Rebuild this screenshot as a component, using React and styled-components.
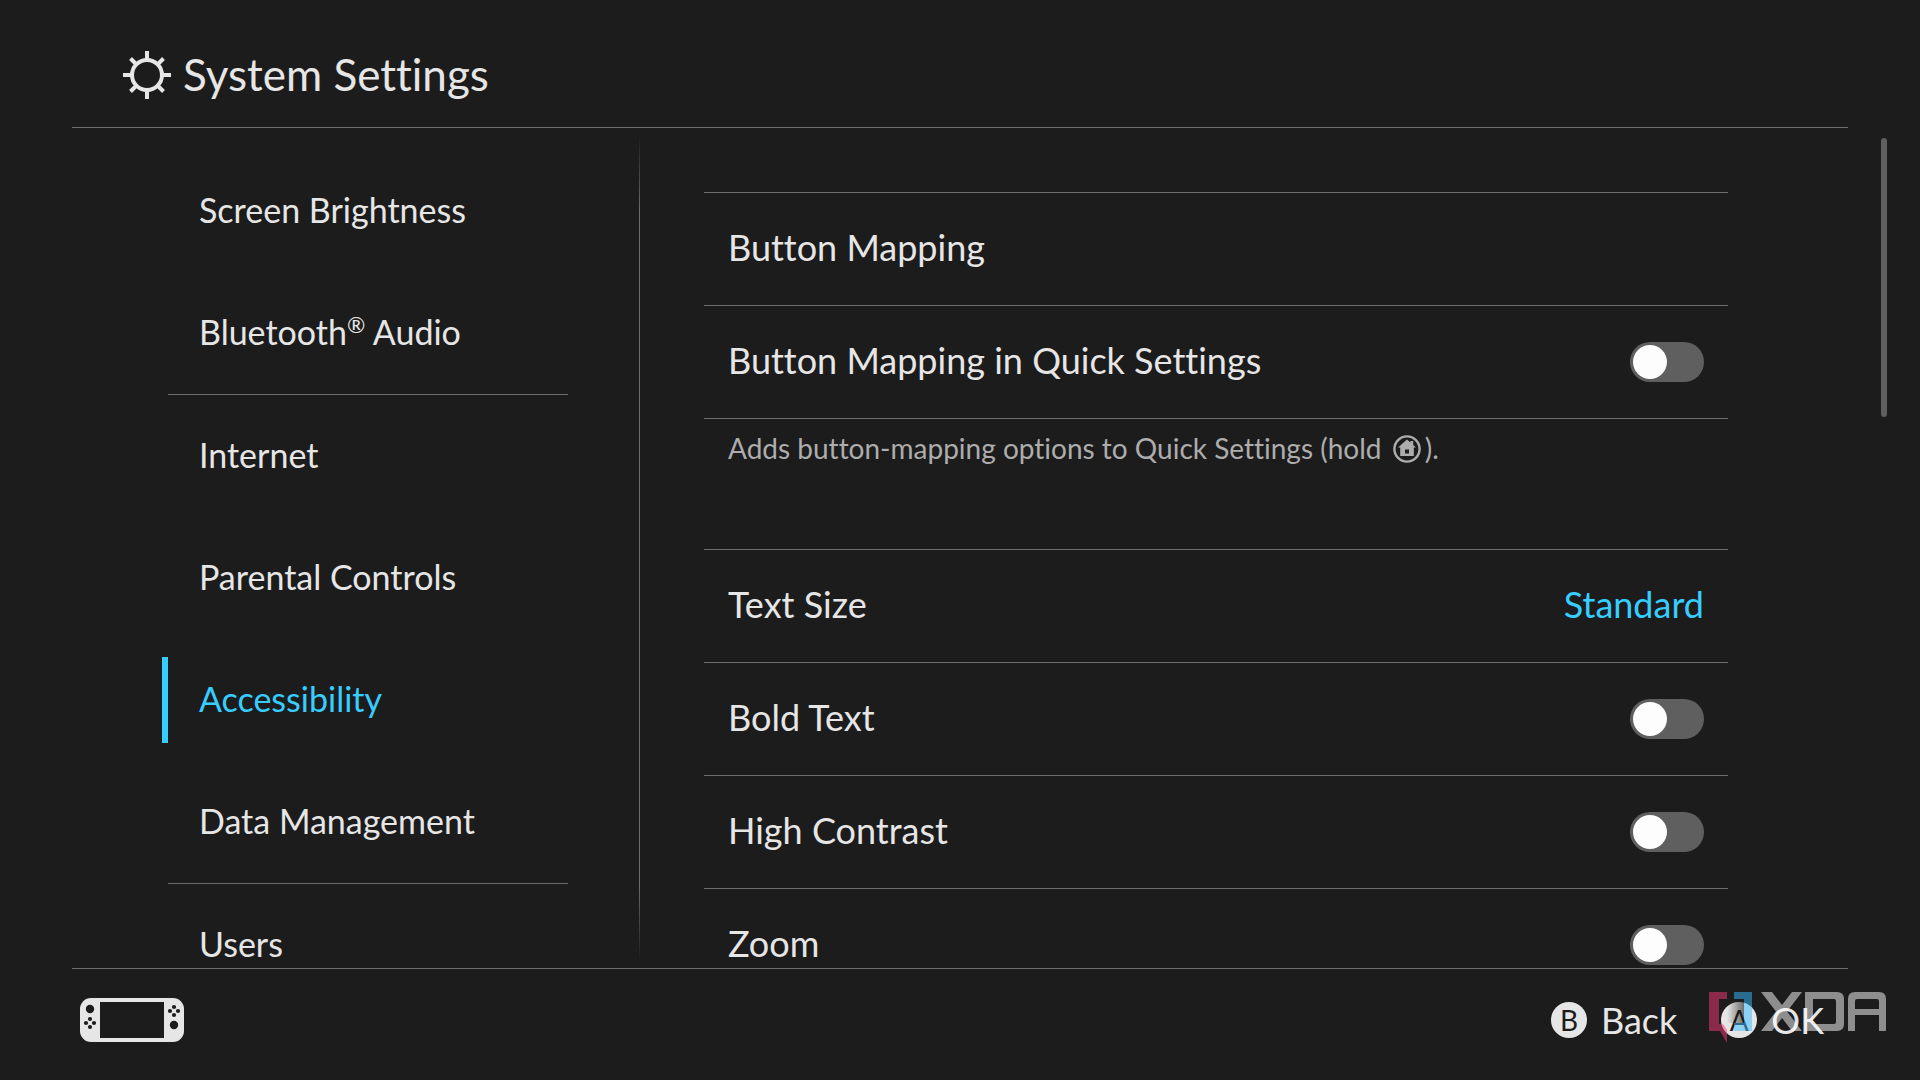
import React, { useState } from "react";
import styled, { createGlobalStyle, css } from "styled-components";

const EstiloGlobal = createGlobalStyle`
  :root {
    --color-fondo: #1c1c1c;
    --color-texto: #e6e6e6;
    --color-texto-suave: #adadad;
    --color-linea: #6c6c6c;
    --color-gris-control: #5f5f5f;
    --color-activo: #37cdff;
    --fuente: Lato, "Noto Sans", sans-serif;
  }

  * {
    box-sizing: border-box;
  }

  body {
    margin: 0;
    background: var(--color-fondo);
    color: var(--color-texto);
    font-family: var(--fuente);
    font-variant-ligatures: none;
  }

  button {
    font-family: inherit;
    font-variant-ligatures: inherit;
    color: inherit;
    background: none;
    border: 0;
    padding: 0;
    cursor: pointer;
  }
`;

const Pagina = styled.div`
  height: 100vh;
  display: grid;
  grid-template-rows: auto minmax(0, 1fr) auto;
  overflow: hidden;
`;

const Cabecera = styled.header`
  height: 128px;
  margin: 0 72px;
  padding: 0 51px 6px;
  display: flex;
  align-items: flex-end;
  border-bottom: 1px solid var(--color-linea);
`;

const Titulo = styled.h1`
  margin: 0;
  height: 92px;
  display: flex;
  align-items: center;
  gap: 12px;
  font-size: 44px;
  line-height: 48px;
  font-weight: 400;

  span {
    padding-bottom: 2px;
  }
`;

const Cuerpo = styled.div`
  min-height: 0;
  display: grid;
  grid-template-rows: 100%;
  grid-template-columns: 1fr 2fr;
`;

const Lateral = styled.nav`
  min-height: 0;
  padding: 22px 71px 0 162px;
  border-right: 1px solid;
  border-image: linear-gradient(
      transparent 1%,
      var(--color-linea) 10%,
      var(--color-linea) 90%,
      transparent 99%
    )
    1;
`;

const ListaNav = styled.ul`
  height: 100%;
  margin: 0;
  padding: 0;
  list-style: none;
  overflow: hidden;
`;

const ElementoNav = styled.li`
  height: ${(props) => (props.$separado ? "123px" : "122px")};
  padding-top: 18px;
  ${(props) =>
    props.$separado &&
    css`
      background: linear-gradient(var(--color-linea), var(--color-linea)) 6px
        100% / 100% 1px no-repeat;
    `}
`;

const BotonNav = styled.button`
  width: 100%;
  height: 86px;
  padding: 0 0 3px 31px;
  border-left: 6px solid
    ${(props) => (props.$activo ? "var(--color-activo)" : "transparent")};
  color: ${(props) =>
    props.$activo ? "var(--color-activo)" : "var(--color-texto)"};
  font-size: 34px;
  line-height: 40px;
  text-align: left;

  sup {
    font-size: 22px;
    line-height: 0;
  }
`;

const Panel = styled.main`
  min-height: 0;
  padding: 0 33px 0 64px;
  display: flex;
  justify-content: space-between;
`;

const Ajustes = styled.div`
  flex: 1;
  margin-right: 153px;
  padding-top: 64px;
  overflow: hidden;
`;

const Fila = styled.div`
  height: 113px;
  padding: 0 24px;
  display: flex;
  align-items: center;
  justify-content: space-between;
  border-top: 1px solid var(--color-linea);
  font-size: 36px;
  line-height: 44px;
`;

const BotonFila = styled.button`
  flex: 1;
  height: 100%;
  padding-bottom: 4px;
  display: flex;
  align-items: center;
  justify-content: space-between;
  font-size: 36px;
  line-height: 44px;
  text-align: left;
`;

const EtiquetaFila = styled.label`
  padding-bottom: 4px;
  cursor: pointer;
`;

const Valor = styled.span`
  color: var(--color-activo);
`;

const Nota = styled.p`
  height: 131px;
  margin: 0;
  padding: 11px 24px 0;
  border-top: 1px solid var(--color-linea);
  color: var(--color-texto-suave);
  font-size: 28px;
  line-height: 36px;

  svg {
    margin: 0 4px;
    vertical-align: -4px;
  }
`;

const Interruptor = styled.input`
  appearance: none;
  width: 74px;
  height: 40px;
  margin: 0;
  padding: 3px;
  display: flex;
  border-radius: 20px;
  background: ${(props) =>
    props.checked ? "var(--color-activo)" : "var(--color-gris-control)"};
  cursor: pointer;

  &::before {
    content: "";
    width: 34px;
    height: 34px;
    margin-left: ${(props) => (props.checked ? "auto" : "0")};
    border-radius: 50%;
    background: #fdfdfd;
  }
`;

const BarraDesplazamiento = styled.div`
  width: 6px;
  height: 279px;
  margin-top: 10px;
  border-radius: 3px;
  background: var(--color-gris-control);
`;

const Pie = styled.footer`
  height: 112px;
  margin: 0 72px;
  padding: 0 24px 10px 8px;
  display: flex;
  align-items: center;
  justify-content: space-between;
  border-top: 1px solid var(--color-linea);
`;

const Acciones = styled.div`
  display: flex;
  gap: 44px;
`;

const BotonAccion = styled.button`
  display: flex;
  align-items: center;
  gap: 14px;
  font-size: 36px;
  line-height: 44px;
`;

const Tecla = styled.span`
  width: 36px;
  height: 36px;
  border-radius: 50%;
  background: var(--color-texto);
  color: var(--color-fondo);
  font-size: 28px;
  line-height: 36px;
  text-align: center;
`;

const MarcaDeAgua = styled.svg`
  position: absolute;
  right: 26px;
  bottom: 30px;
  pointer-events: none;
`;

function IconoSistema() {
  return (
    <svg
      width="48"
      height="48"
      viewBox="0 0 48 48"
      fill="none"
      stroke="currentColor"
      strokeWidth="4"
      aria-hidden="true"
    >
      <circle cx="24" cy="24" r="15" />
      <path d="M24 0v8M24 40v8M0 24h8M40 24h8" />
      <path d="M7.5 7.5l6 6M34.5 34.5l6 6M7.5 40.5l6-6M34.5 13.5l6-6" />
    </svg>
  );
}

function IconoInicio() {
  return (
    <svg width="28" height="28" viewBox="0 0 28 28" role="img" aria-label="HOME">
      <circle
        cx="14"
        cy="14"
        r="12.6"
        fill="none"
        stroke="currentColor"
        strokeWidth="2.4"
      />
      <path
        fill="currentColor"
        fillRule="evenodd"
        d="M14 4.6l3.4 3V6h2.8v4l2.8 2.6h-2.2V21H7.2v-8.4H5zM12 14.5v4h4v-4z"
      />
    </svg>
  );
}

function IconoConsola() {
  return (
    <svg width="104" height="44" viewBox="0 0 104 44" role="img" aria-label="Console">
      <rect width="104" height="44" rx="11" fill="#e6e6e6" />
      <g fill="#1c1c1c">
        <rect x="20" y="4" width="64" height="36" />
        <circle cx="10" cy="11" r="4.2" />
        <circle cx="10" cy="21" r="2.1" />
        <circle cx="6" cy="25" r="2.1" />
        <circle cx="14" cy="25" r="2.1" />
        <circle cx="10" cy="29" r="2.1" />
        <circle cx="94" cy="9" r="2.1" />
        <circle cx="90" cy="13" r="2.1" />
        <circle cx="98" cy="13" r="2.1" />
        <circle cx="94" cy="17" r="2.1" />
        <circle cx="94" cy="27" r="4.2" />
      </g>
    </svg>
  );
}

function LogoXda() {
  return (
    <MarcaDeAgua width="194" height="66" viewBox="0 0 194 66" role="img" aria-label="XDA">
      <defs>
        <linearGradient id="sombra">
          <stop offset="0" stopColor="#1c1c1c" stopOpacity="0" />
          <stop offset="1" stopColor="#1c1c1c" stopOpacity="0.6" />
        </linearGradient>
      </defs>
      <path fill="url(#sombra)" d="M27 15H44V39H27z" />
      <g fillOpacity="0.5">
        <path fill="#f83a7a" d="M9 8H27V15H19V40H23L27 46V59L20 47H9z" />
        <path fill="#38bcff" d="M34 8H52V47H34V39H44V15H34z" />
        <path
          fill="#fff"
          d="M61 8H72L82 21L92 8H102L87 27.500L102 47H92L82 34L72 47H61L76 27.500z"
        />
        <path
          fill="#fff"
          fillRule="evenodd"
          d="M105 8H137Q144 8 144 15V40Q144 47 137 47H105zM113 15V40H134Q136 40 136 38V17Q136 15 134 15z"
        />
        <path
          fill="#fff"
          fillRule="evenodd"
          d="M148 47V15Q148 8 155 8H179Q186 8 186 15V47H179V31H155V47zM155 25H179V17Q179 15 177 15H157Q155 15 155 17z"
        />
      </g>
    </MarcaDeAgua>
  );
}

const secciones = [
  { id: "brillo", texto: "Screen Brightness" },
  {
    id: "bluetooth",
    texto: (
      <>
        Bluetooth<sup>®</sup> Audio
      </>
    ),
    separado: true,
  },
  { id: "internet", texto: "Internet" },
  { id: "parental", texto: "Parental Controls" },
  { id: "accesibilidad", texto: "Accessibility" },
  { id: "datos", texto: "Data Management", separado: true },
  { id: "usuarios", texto: "Users" },
];

function FilaInterruptor({ id, texto }) {
  const [encendido, setEncendido] = useState(false);
  return (
    <Fila>
      <EtiquetaFila htmlFor={id}>{texto}</EtiquetaFila>
      <Interruptor
        id={id}
        type="checkbox"
        role="switch"
        checked={encendido}
        onChange={(e) => setEncendido(e.target.checked)}
      />
    </Fila>
  );
}

export default function App() {
  const [activa, setActiva] = useState("accesibilidad");

  return (
    <Pagina>
      <EstiloGlobal />
      <Cabecera>
        <Titulo>
          <IconoSistema />
          <span>System Settings</span>
        </Titulo>
      </Cabecera>

      <Cuerpo>
        <Lateral aria-label="Settings sections">
          <ListaNav>
            {secciones.map((seccion) => (
              <ElementoNav key={seccion.id} $separado={seccion.separado}>
                <BotonNav
                  type="button"
                  $activo={seccion.id === activa}
                  onClick={() => setActiva(seccion.id)}
                >
                  {seccion.texto}
                </BotonNav>
              </ElementoNav>
            ))}
          </ListaNav>
        </Lateral>

        <Panel>
          <Ajustes>
            <Fila>
              <BotonFila type="button">Button Mapping</BotonFila>
            </Fila>
            <FilaInterruptor
              id="mapeo-rapido"
              texto="Button Mapping in Quick Settings"
            />
            <Nota>
              Adds button-mapping options to Quick Settings (hold{" "}
              <IconoInicio />
              ).
            </Nota>
            <Fila>
              <BotonFila type="button">
                Text Size <Valor>Standard</Valor>
              </BotonFila>
            </Fila>
            <FilaInterruptor id="negrita" texto="Bold Text" />
            <FilaInterruptor id="contraste" texto="High Contrast" />
            <FilaInterruptor id="zoom" texto="Zoom" />
          </Ajustes>
          <BarraDesplazamiento />
        </Panel>
      </Cuerpo>

      <Pie>
        <IconoConsola />
        <Acciones>
          <BotonAccion type="button">
            <Tecla>B</Tecla>
            Back
          </BotonAccion>
          <BotonAccion type="button">
            <Tecla>A</Tecla>
            OK
          </BotonAccion>
        </Acciones>
      </Pie>
      <LogoXda />
    </Pagina>
  );
}
